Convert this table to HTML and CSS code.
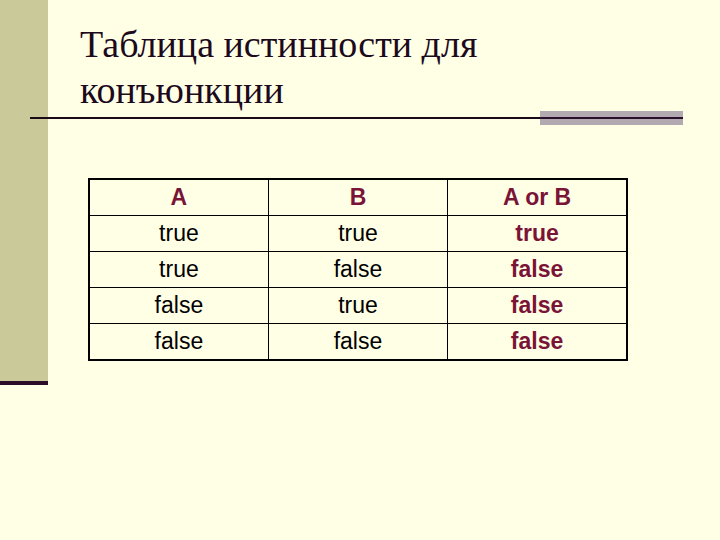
FILE: index.html
```html
<!DOCTYPE html>
<html lang="ru">
<head>
<meta charset="utf-8">
<title>Таблица истинности для конъюнкции</title>
<link rel="stylesheet" href="styles.css">
</head>
<body>
<div class="slide">
  <div class="band"></div>
  <div class="main">
    <h1 class="title">Таблица истинности для<br>конъюнкции</h1>
    <div class="rule-row">
      <div class="rule"></div>
      <div class="accent"></div>
    </div>
    <table class="truth">
      <tr class="head"><td>A</td><td>B</td><td>A or B</td></tr>
      <tr><td>true</td><td>true</td><td class="res">true</td></tr>
      <tr><td>true</td><td>false</td><td class="res">false</td></tr>
      <tr><td>false</td><td>true</td><td class="res">false</td></tr>
      <tr><td>false</td><td>false</td><td class="res">false</td></tr>
    </table>
  </div>
</div>
</body>
</html>
```
FILE: styles.css
```css
html, body {
  margin: 0;
  padding: 0;
  background: #FFFFE6;
}
.slide {
  display: flex;
  align-items: flex-start;
  width: 720px;
  height: 540px;
  background: #FFFFE6;
}
.band {
  flex: 0 0 48px;
  height: 381px;
  background: #C9C99A;
  border-bottom: 4px solid #2A0B28;
}
.main {
  flex: 1;
  padding: 21px 37px 0 0;
}
.title {
  margin: 0 0 -2px 32px;
  font-family: "Liberation Serif", "Times New Roman", serif;
  font-weight: normal;
  font-size: 38px;
  line-height: 46px;
  color: #1C0A1C;
}
.rule-row {
  display: flex;
  align-items: center;
  height: 14px;
  margin-left: -18px;
}
.rule {
  flex: 1;
  height: 2px;
  background: #1A0A18;
}
.accent {
  flex: 0 0 143px;
  height: 14px;
  background: linear-gradient(to bottom, #B2AAB0 0, #B2AAB0 6px, #2A0F2A 6px, #2A0F2A 8px, #B2AAB0 8px);
}
.truth {
  margin: 53px 0 0 40px;
  width: 540px;
  table-layout: fixed;
  border-collapse: collapse;
  border: 2px solid #000;
  font-family: "Liberation Sans", Arial, sans-serif;
  font-size: 23px;
  color: #000;
}
.truth td {
  height: 35px;
  padding: 0;
  text-align: center;
  vertical-align: middle;
  border: 1px solid #000;
}
.truth .head td,
.truth .res {
  color: #7A1436;
  font-weight: bold;
}
```
